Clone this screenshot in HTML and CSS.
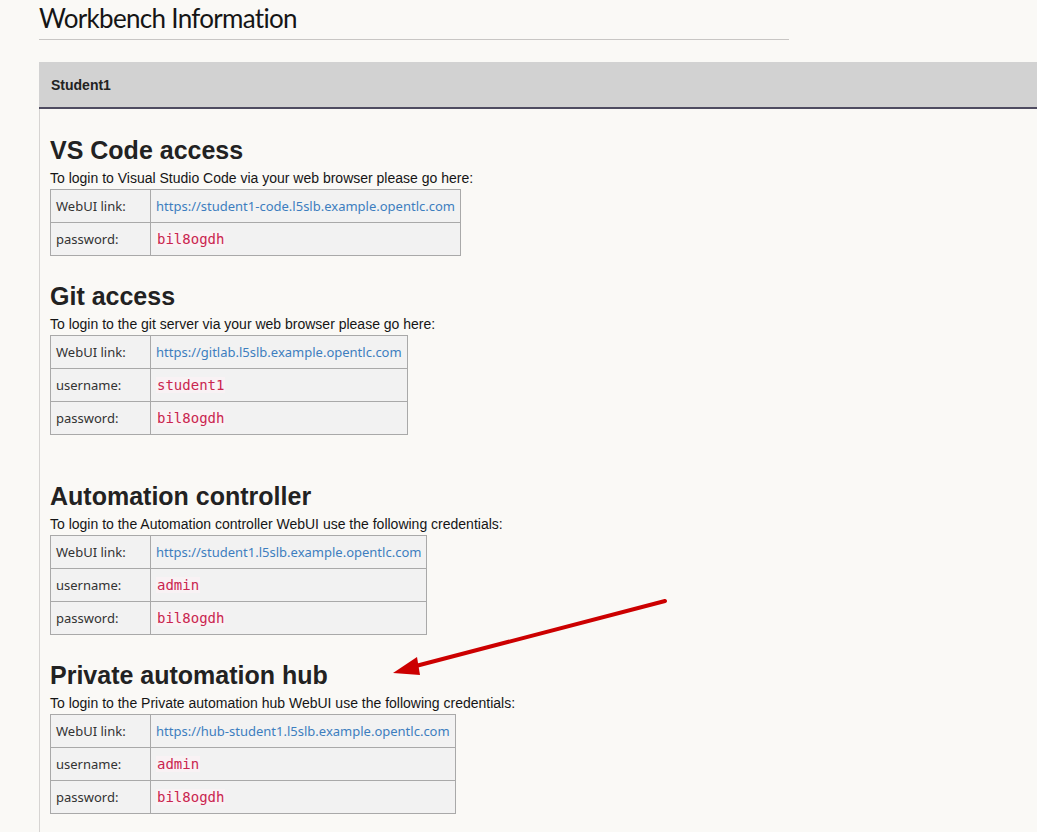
FILE: index.html
```html
<!DOCTYPE html>
<html>
<head>
<meta charset="utf-8">
<title>Workbench Information</title>
<link rel="stylesheet" href="styles.css">
</head>
<body>
<div class="page">
  <h1 class="title">Workbench Information</h1>
  <div class="rule"></div>
  <div class="card">
    <div class="card-head">Student1</div>
    <div class="card-body">
      <section class="sec">
        <h2>VS Code access</h2>
        <p>To login to Visual Studio Code via your web browser please go here:</p>
        <table class="creds">
          <tr><td class="lbl">WebUI link:</td><td><a href="#">https://student1-code.l5slb.example.opentlc.com</a></td></tr>
          <tr><td class="lbl">password:</td><td><code>bil8ogdh</code></td></tr>
        </table>
      </section>
      <section class="sec">
        <h2>Git access</h2>
        <p>To login to the git server via your web browser please go here:</p>
        <table class="creds">
          <tr><td class="lbl">WebUI link:</td><td><a href="#">https://gitlab.l5slb.example.opentlc.com</a></td></tr>
          <tr><td class="lbl">username:</td><td><code>student1</code></td></tr>
          <tr><td class="lbl">password:</td><td><code>bil8ogdh</code></td></tr>
        </table>
      </section>
      <section class="sec sec-wide">
        <h2>Automation controller</h2>
        <p>To login to the Automation controller WebUI use the following credentials:</p>
        <table class="creds">
          <tr><td class="lbl">WebUI link:</td><td><a href="#">https://student1.l5slb.example.opentlc.com</a></td></tr>
          <tr><td class="lbl">username:</td><td><code>admin</code></td></tr>
          <tr><td class="lbl">password:</td><td><code>bil8ogdh</code></td></tr>
        </table>
      </section>
      <section class="sec">
        <h2>Private automation hub</h2>
        <p>To login to the Private automation hub WebUI use the following credentials:</p>
        <table class="creds">
          <tr><td class="lbl">WebUI link:</td><td><a href="#">https://hub-student1.l5slb.example.opentlc.com</a></td></tr>
          <tr><td class="lbl">username:</td><td><code>admin</code></td></tr>
          <tr><td class="lbl">password:</td><td><code>bil8ogdh</code></td></tr>
        </table>
      </section>
    </div>
  </div>
</div>
<svg class="arrow" width="1037" height="832" viewBox="0 0 1037 832">
  <line x1="665" y1="601" x2="412" y2="667" stroke="#cc0000" stroke-width="4" stroke-linecap="round"/>
  <polygon points="393,673 417,657 420,675" fill="#cc0000"/>
</svg>
</body>
</html>
```
FILE: styles.css
```css
html, body {
  margin: 0;
  padding: 0;
  background: #faf9f6;
  overflow: hidden;
}
body {
  font-family: "Liberation Sans", Arial, sans-serif;
  color: #151515;
  position: relative;
  min-height: 832px;
}
.page {
  padding-left: 39px;
}
.title {
  margin: 0;
  font-family: Lato, "Noto Sans", sans-serif;
  font-weight: 400;
  font-size: 26px;
  letter-spacing: -0.7px;
  line-height: 36px;
  color: #151515;
}
.rule {
  width: 750px;
  height: 1px;
  background: #c8c6c4;
  margin-top: 3px;
}
.card {
  margin-top: 22px;
}
.card-head {
  background: #d2d2d2;
  height: 45px;
  border-bottom: 2px solid #4f4c61;
  box-sizing: content-box;
  padding-left: 12px;
  display: flex;
  align-items: center;
  font-weight: 700;
  font-size: 14px;
  color: #222;
}
.card-body {
  border-left: 1px solid #d6d4d2;
  padding: 26px 0 40px 10px;
}
.sec + .sec {
  margin-top: 25px;
}
.sec-wide {
  padding-top: 21px;
}
h2 {
  margin: 0 0 3px;
  font-size: 25px;
  line-height: 30px;
  font-weight: 700;
  color: #222;
}
p {
  margin: 0 0 1px;
  font-size: 14px;
  line-height: 20px;
  color: #151515;
}
.creds {
  border-collapse: collapse;
  background: #f2f2f2;
  font-family: "Noto Sans", sans-serif;
  font-size: 13px;
}
.creds td {
  border: 1px solid #a9a9a9;
  height: 33px;
  padding: 0 5px;
  box-sizing: border-box;
  vertical-align: middle;
}
.creds td.lbl {
  width: 100px;
  color: #333;
}
.creds a {
  color: #3d7ebf;
  text-decoration: none;
}
.creds code {
  font-family: "DejaVu Sans Mono", monospace;
  font-size: 14px;
  color: #c9254f;
  background: #f9f2f4;
  padding: 0 1px;
}
.arrow {
  position: absolute;
  left: 0;
  top: 0;
  pointer-events: none;
}
```
